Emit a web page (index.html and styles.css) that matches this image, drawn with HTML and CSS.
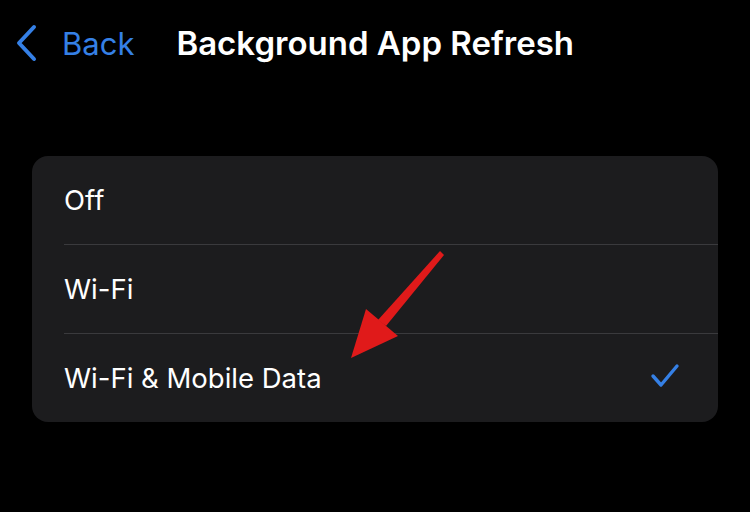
FILE: index.html
```html
<!DOCTYPE html>
<html lang="en">
<head>
  <meta charset="UTF-8" />
  <title>Background App Refresh</title>
  <link rel="stylesheet" href="styles.css">
</head>
<body>

  <div class="navbar">
    <a class="back">
      <svg class="chevron" width="22" height="38" viewBox="0 0 22 38">
        <path d="M18 3 L3 19 L18 35" fill="none" stroke="#3580e6" stroke-width="4" stroke-linecap="round" stroke-linejoin="round"/>
      </svg>
      <span>Back</span>
    </a>
    <div class="title">Background App Refresh</div>
  </div>

  <div class="group">
    <div class="row"><span>Off</span></div>
    <div class="row"><span>Wi-Fi</span></div>
    <div class="row">
      <span>Wi-Fi &amp; Mobile Data</span>
      <svg class="check" width="30" height="26" viewBox="0 0 30 26">
        <path d="M3 13 L11 22 L27 3" fill="none" stroke="#3580e6" stroke-width="3.4" stroke-linecap="round" stroke-linejoin="round"/>
      </svg>
    </div>

    <!-- red annotation arrow -->
    <svg class="arrow" width="150" height="130" viewBox="0 0 150 130">
      <path d="M140 11 L144 15 L86 86 L78 80 Z" fill="#e01a1a"/>
      <path d="M66 69 L98 96 L51 118 Z" fill="#e01a1a"/>
    </svg>
  </div>

</body>
</html>
```

FILE: styles.css
```css
body {
  margin: 0;
  background: #000;
  color: #fff;
  font-family: Inter, "Noto Sans", sans-serif;
}

.navbar {
  display: flex;
  align-items: center;
  height: 86px;
  padding-left: 16px;
}

.back {
  display: flex;
  align-items: center;
  gap: 24px;
  color: #3580e6;
  font-size: 31px;
  margin-right: 42px;
}

.chevron {
  display: block;
}

.title {
  font-size: 33px;
  font-weight: 600;
}

.group {
  position: relative;
  margin: 70px 32px 0 32px;
  background: #1c1c1e;
  border-radius: 16px;
  padding-left: 32px;
}

.row {
  display: flex;
  align-items: center;
  justify-content: space-between;
  height: 88px;
  padding-right: 38px;
  font-size: 27.5px;
  border-bottom: 1px solid #3a3a3d;
}

.row:last-of-type {
  border-bottom: none;
}

.check {
  display: block;
  margin-top: -4px;
}

.arrow {
  position: absolute;
  left: 268px;
  top: 84px;
}
```
